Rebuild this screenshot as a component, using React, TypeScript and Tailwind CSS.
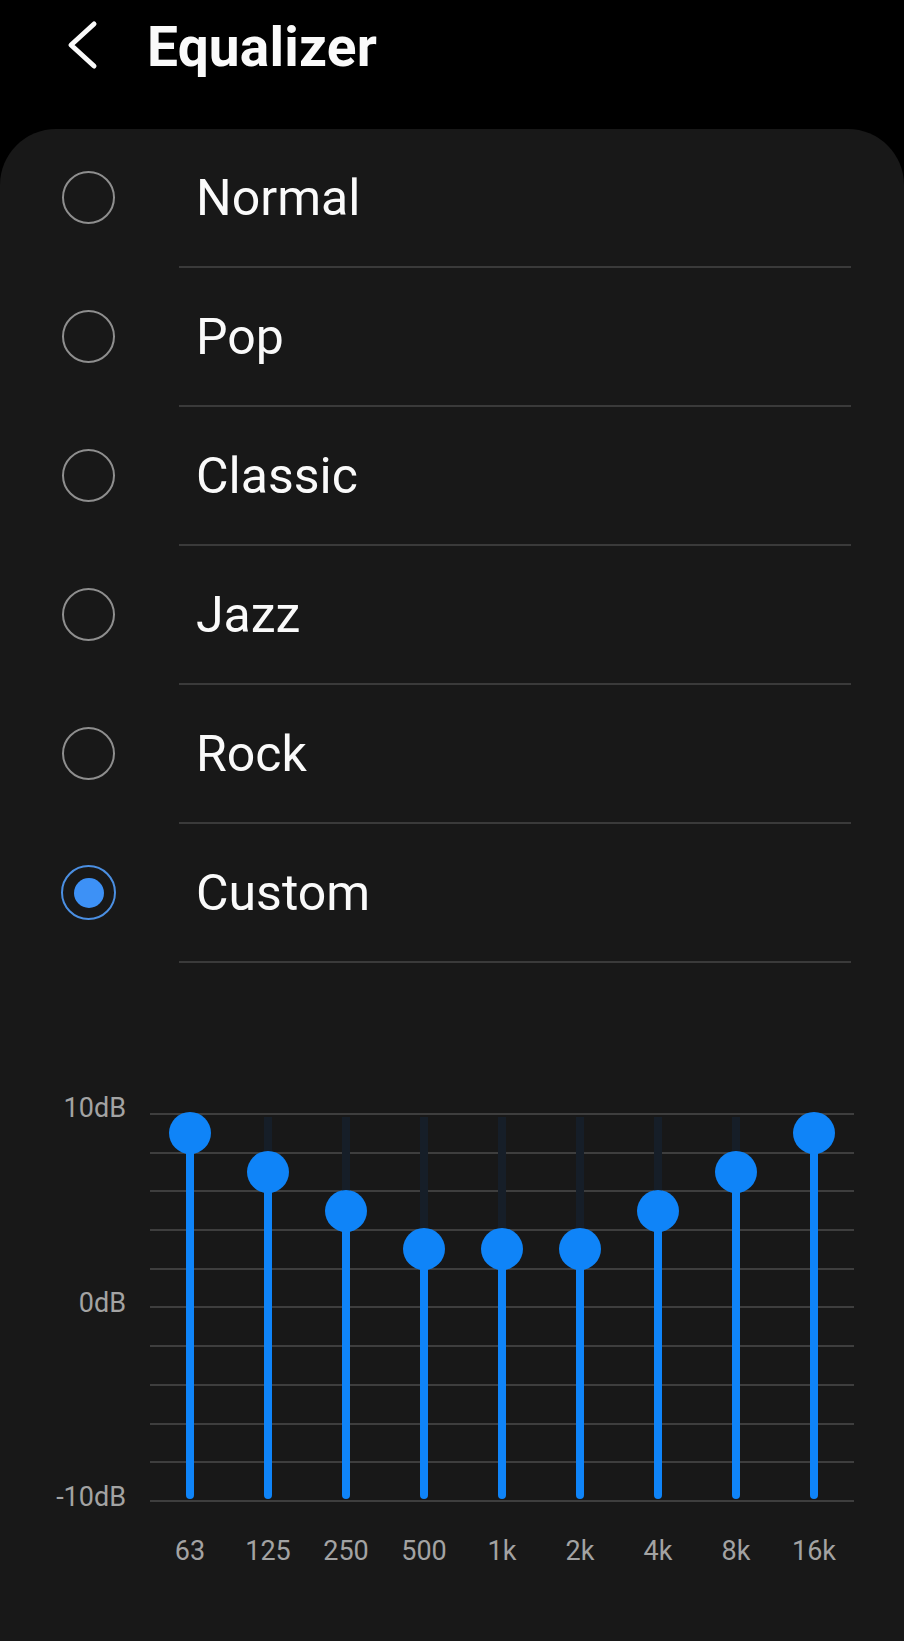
import React from "react";

const presets = ["Normal", "Pop", "Classic", "Jazz", "Rock", "Custom"];
const selected = "Custom";

const bands = [
  { label: "63", db: 9 },
  { label: "125", db: 7 },
  { label: "250", db: 5 },
  { label: "500", db: 3 },
  { label: "1k", db: 3 },
  { label: "2k", db: 3 },
  { label: "4k", db: 5 },
  { label: "8k", db: 7 },
  { label: "16k", db: 9 },
];

// grid: 389px tall, line at 1px = +10dB, 387px = -10dB
const PX_PER_DB = 19.35;

const Radio = ({ checked }: { checked: boolean }) =>
  checked ? (
    <div className="w-[55px] h-[55px] rounded-full border-[2.5px] border-[#4b8fe2] flex items-center justify-center">
      <div className="w-[30px] h-[30px] rounded-full bg-[#3d91f6]" />
    </div>
  ) : (
    <div className="w-[53px] h-[53px] rounded-full border-[2.5px] border-[#8e8e8e]" />
  );

const Band = ({ db }: { db: number }) => {
  const knobY = 1 + (10 - db) * PX_PER_DB;
  return (
    <div className="relative flex justify-center h-full">
      <div className="absolute top-[4px] w-[8px] bg-[#161e28]" style={{ height: knobY }} />
      <div
        className="absolute bottom-[3px] w-[8px] bg-[#0f84f8] rounded-b-full"
        style={{ top: knobY }}
      />
      <div
        className="absolute w-[42px] h-[42px] rounded-full bg-[#0f84f8] -translate-y-1/2"
        style={{ top: knobY }}
      />
    </div>
  );
};

export default function App() {
  return (
    <div className="w-[904px] h-[1641px] bg-black flex flex-col font-['Roboto',sans-serif] text-[#fafafa] overflow-hidden">
      <div className="h-[129px] shrink-0">
        <div className="h-[90px] flex items-center">
          <svg width="40" height="50" viewBox="0 0 40 50" className="ml-[62px]">
            <polyline
              points="32,4 9,25 32,46"
              fill="none"
              stroke="#fafafa"
              strokeWidth="5"
              strokeLinecap="round"
              strokeLinejoin="round"
            />
          </svg>
          <h1 className="ml-[45px] mt-[5px] text-[55px] leading-none font-bold tracking-[0.2px]">Equalizer</h1>
        </div>
      </div>

      <div className="flex-1 bg-[#181818] rounded-t-[56px]">
        {presets.map((p) => (
          <div key={p} className="flex h-[139px]">
            <div className="w-[179px] pb-[2px] flex items-center justify-center pr-[2px]">
              <Radio checked={p === selected} />
            </div>
            <div className="flex-1 mr-[53px] border-b-2 border-[#3a3a3a] flex items-center pl-[17px]">
              <span className="text-[50px] leading-none">{p}</span>
            </div>
          </div>
        ))}

        <div className="flex">
          <div className="w-[126px] mt-[130px] h-[419px] flex flex-col justify-between items-end text-[27px] leading-[30px] text-[#a3a3a3]">
            <span>10dB</span>
            <span>0dB</span>
            <span>-10dB</span>
          </div>
          <div className="ml-[24px] w-[704px] mt-[150px]">
            <div className="relative h-[389px]">
              <div className="absolute inset-0 flex flex-col justify-between">
                {Array.from({ length: 11 }).map((_, i) => (
                  <div key={i} className="h-[2px] bg-[#3e3e3e]" />
                ))}
              </div>
              <div className="absolute inset-0 grid grid-cols-9 px-[1px]">
                {bands.map((b) => (
                  <Band key={b.label} db={b.db} />
                ))}
              </div>
            </div>
            <div className="grid grid-cols-9 px-[1px] mt-[34px] text-[27px] leading-[30px] text-[#a3a3a3]">
              {bands.map((b) => (
                <span key={b.label} className="text-center">
                  {b.label}
                </span>
              ))}
            </div>
          </div>
        </div>
      </div>
    </div>
  );
}
